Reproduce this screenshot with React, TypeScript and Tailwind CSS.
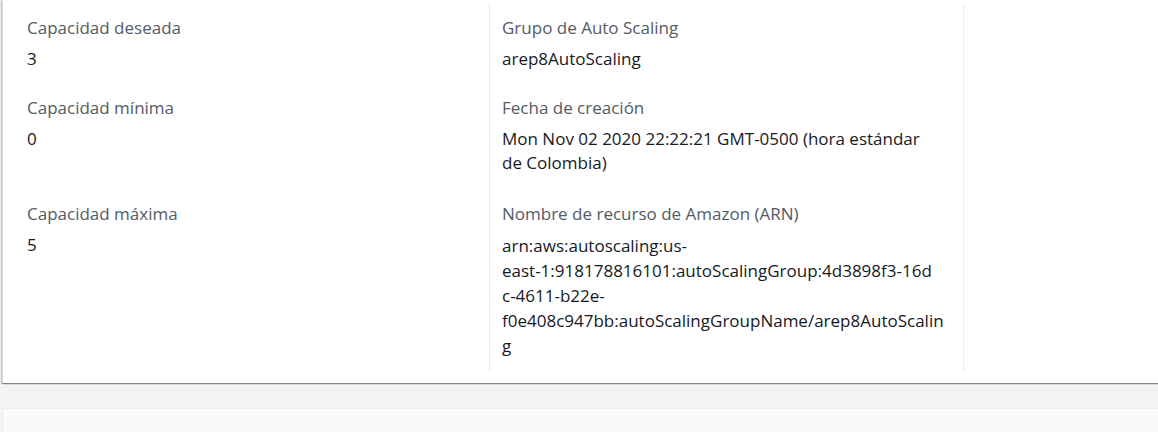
import React from "react";

const Cell = ({
  label,
  lines,
  border,
  pb,
  first,
  lh,
}: {
  label?: string;
  lines?: string[];
  border?: boolean;
  pb: string;
  first?: boolean;
  lh?: string;
}) => (
  <div
    className={
      (border ? "border-l border-[#eaeded] " : "") +
      (first ? "pt-[13px] " : "") +
      pb +
      " px-[12px]"
    }
  >
    {label && (
      <>
        <div className="text-[17px] leading-[24px] text-[#545b64]">{label}</div>
        <div className={"mt-[7px] text-[17px] text-[#16191f] " + (lh ?? "leading-[24px]")}>
          {lines?.map((l, i) => (
            <div key={i} className="whitespace-nowrap">
              {l}
            </div>
          ))}
        </div>
      </>
    )}
  </div>
);

export default function App() {
  return (
    <div
      className="w-[1158px] h-[432px] overflow-hidden bg-[#f2f3f3] pl-[2px]"
      style={{ fontFamily: '"Open Sans", "Noto Sans", Arial, sans-serif' }}
    >
      <div className="w-[1400px] bg-white border-l border-[#d5dbdb] pl-[12px] pt-[3px] pb-[11px] shadow-[0_1px_1px_0_rgba(0,28,36,0.3),1px_1px_1px_0_rgba(0,28,36,0.15),-1px_1px_1px_0_rgba(0,28,36,0.15)]">
        <div className="grid grid-cols-[474px_474px_474px]">
          <Cell first pb="pb-[25px]" label="Capacidad deseada" lines={["3"]} />
          <Cell first pb="pb-[25px]" border label="Grupo de Auto Scaling" lines={["arep8AutoScaling"]} />
          <Cell first pb="pb-[25px]" border />
          <Cell pb="pb-[27px]" label="Capacidad mínima" lines={["0"]} />
          <Cell
            pb="pb-[27px]"
            border
            label="Fecha de creación"
            lines={["Mon Nov 02 2020 22:22:21 GMT-0500 (hora estándar", "de Colombia)"]}
          />
          <Cell pb="pb-[27px]" border />
          <Cell pb="pb-[14px]" label="Capacidad máxima" lines={["5"]} />
          <Cell
            pb="pb-[14px]"
            border
            lh="leading-[25px]"
            label="Nombre de recurso de Amazon (ARN)"
            lines={[
              "arn:aws:autoscaling:us-",
              "east-1:918178816101:autoScalingGroup:4d3898f3-16d",
              "c-4611-b22e-",
              "f0e408c947bb:autoScalingGroupName/arep8AutoScalin",
              "g",
            ]}
          />
          <Cell pb="pb-[14px]" border />
        </div>
      </div>
      <div className="mt-[25px] w-[1400px] h-[40px] bg-[#fafafa] border-t border-[#eaeded] border-l" />
    </div>
  );
}
